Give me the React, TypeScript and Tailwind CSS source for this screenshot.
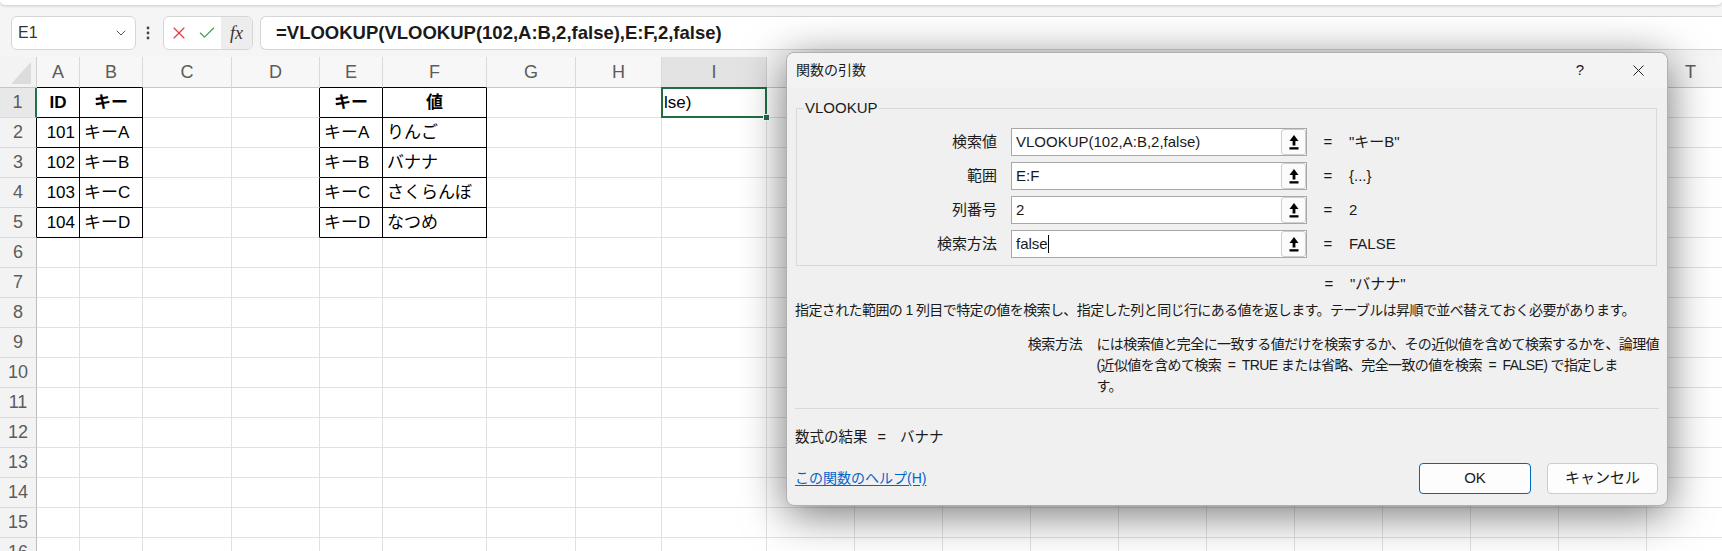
import { Check, ChevronDown, X } from 'lucide-react';

const COLS = ['A', 'B', 'C', 'D', 'E', 'F', 'G', 'H', 'I', 'J', 'K', 'L', 'M', 'N', 'O', 'P', 'Q', 'R', 'S', 'T'];
const ROWS = Array.from({ length: 16 }, (_, i) => i + 1);

type Cell = { text: string; align: 'left' | 'right' | 'center'; bold?: boolean };

const DATA: Record<string, Cell> = {
  A1: { text: 'ID', align: 'center', bold: true },
  B1: { text: 'キー', align: 'center', bold: true },
  E1: { text: 'キー', align: 'center', bold: true },
  F1: { text: '値', align: 'center', bold: true },
  A2: { text: '101', align: 'right' },
  A3: { text: '102', align: 'right' },
  A4: { text: '103', align: 'right' },
  A5: { text: '104', align: 'right' },
  B2: { text: 'キーA', align: 'left' },
  B3: { text: 'キーB', align: 'left' },
  B4: { text: 'キーC', align: 'left' },
  B5: { text: 'キーD', align: 'left' },
  E2: { text: 'キーA', align: 'left' },
  E3: { text: 'キーB', align: 'left' },
  E4: { text: 'キーC', align: 'left' },
  E5: { text: 'キーD', align: 'left' },
  F2: { text: 'りんご', align: 'left' },
  F3: { text: 'バナナ', align: 'left' },
  F4: { text: 'さくらんぼ', align: 'left' },
  F5: { text: 'なつめ', align: 'left' },
};

const ARGS = [
  { label: '検索値', value: 'VLOOKUP(102,A:B,2,false)', result: '"キーB"' },
  { label: '範囲', value: 'E:F', result: '{...}' },
  { label: '列番号', value: '2', result: '2' },
  { label: '検索方法', value: 'false', result: 'FALSE', caret: true },
];

// columns J..S sit under the dialog, their letters are never visible
const HIDDEN = ['J', 'K', 'L', 'M', 'N', 'O', 'P', 'Q', 'R', 'S'];

function inTable(c: string, r: number) {
  return r <= 5 && (c === 'A' || c === 'B' || c === 'E' || c === 'F');
}

function RefButton() {
  return (
    <div className="w-[25px] h-full shrink-0 border border-[#cfcfcf] rounded-[3px] bg-[#fbfbfb] flex items-center justify-center">
      <svg width="10" height="15" viewBox="0 0 10 15">
        <path d="M5 0 L9.5 6 L0.5 6 Z" fill="#000" />
        <rect x="3.6" y="5.5" width="2.8" height="5" fill="#000" />
        <rect x="0.5" y="12.2" width="9" height="2.3" fill="#000" />
      </svg>
    </div>
  );
}

function Dialog() {
  return (
    <div className="absolute left-[786px] top-[52px] w-[882px] h-[454px] z-10 bg-[#f0f0f0] rounded-[8px] border border-[#b0b0b0] shadow-[0_8px_44px_rgba(0,0,0,0.55)] flex flex-col text-[#1a1a1a]">
      <div className="h-[35px] shrink-0 flex items-center pl-[9px] bg-[#f3f3f3] rounded-t-[8px]">
        <span className="text-[14px]">関数の引数</span>
        <div className="ml-auto flex items-center gap-[12px] pr-[6px]">
          <div className="w-[46px] flex justify-center text-[15px]">?</div>
          <div className="w-[46px] flex justify-center">
            <X size={19} strokeWidth={1.2} />
          </div>
        </div>
      </div>

      <div className="flex-1 px-[8px] flex flex-col">
        <fieldset className="mt-[10px] ml-[1px] mr-[2px] border border-[#d9d9d9] pb-[7px]">
          <legend className="ml-[7px] px-[1px] text-[15px] leading-[20px]">VLOOKUP</legend>
          <div className="mt-[10px] flex flex-col gap-[6px]">
            {ARGS.map((a) => (
              <div key={a.label} className="flex items-center h-[28px]">
                <div className="w-[200px] text-right text-[15px]">{a.label}</div>
                <div className="ml-[14px] w-[296px] h-[28px] border border-[#a8a8a8] bg-white flex items-center">
                  <div className="flex-1 pl-[4px] text-[15px] flex items-center">
                    {a.value}
                    {a.caret && <span className="w-px h-[18px] bg-black" />}
                  </div>
                  <RefButton />
                </div>
                <div className="w-[42px] text-center text-[15px]">=</div>
                <div className="text-[15px]">{a.result}</div>
              </div>
            ))}
          </div>
        </fieldset>

        <div className="mt-[8px] flex h-[20px] items-center text-[15px]">
          <div className="w-[513px]" />
          <div className="w-[42px] text-center">=</div>
          <div>"バナナ"</div>
        </div>

        <div className="mt-[6px] leading-[20px] text-[14px] tracking-[-0.6px] whitespace-nowrap">
          指定された範囲の 1 列目で特定の値を検索し、指定した列と同じ行にある値を返します。テーブルは昇順で並べ替えておく必要があります。
        </div>

        <div className="mt-[14px] flex text-[14px] leading-[21px]">
          <div className="w-[294px] text-right tracking-[-0.3px]">検索方法</div>
          <div className="ml-[14px] flex flex-col whitespace-nowrap tracking-[-0.6px]">
            <span>には検索値と完全に一致する値だけを検索するか、その近似値を含めて検索するかを、論理値</span>
            <span>(近似値を含めて検索 &nbsp;=&nbsp; TRUE または省略、完全一致の値を検索 &nbsp;=&nbsp; FALSE) で指定しま</span>
            <span>す。</span>
          </div>
        </div>

        <div className="mt-[11px] h-px bg-[#d9d9d9]" />

        <div className="mt-[19px] h-[20px] flex items-center text-[14.5px]">
          <span>数式の結果</span>
          <span className="ml-[10px]">=</span>
          <span className="ml-[14px]">バナナ</span>
        </div>

        <div className="mt-auto mb-[11px] flex items-center justify-between">
          <span className="text-[14px] text-[#0066cc] underline underline-offset-2">この関数のヘルプ(H)</span>
          <div className="flex gap-[16px] mr-[1px]">
            <div className="w-[112px] h-[31px] border border-[#0067c0] rounded-[4px] bg-[#fdfdfd] flex items-center justify-center text-[15px]">
              OK
            </div>
            <div className="w-[111px] h-[31px] border border-[#cccccc] rounded-[4px] bg-[#fdfdfd] flex items-center justify-center text-[15px]">
              キャンセル
            </div>
          </div>
        </div>
      </div>
    </div>
  );
}

function FormulaBar() {
  return (
    <div className="h-[57px] bg-[#f5f5f5]">
      <div className="h-[5px] bg-white rounded-b-[6px] shadow-[0_1px_3px_rgba(0,0,0,0.18)]" />
      <div className="flex items-center pt-[11px] pl-[11px]">
        <div className="w-[125px] h-[34px] bg-white border border-[#d6d6d6] rounded-[6px] flex items-center justify-between pl-[6px] pr-[6px]">
          <span className="text-[16px] text-[#333]">E1</span>
          <ChevronDown size={16} strokeWidth={1.4} className="text-[#444]" />
        </div>
        <div className="ml-[9px] w-[6px] flex justify-center">
          <svg width="4" height="14" viewBox="0 0 4 14">
            <circle cx="2" cy="2" r="1.4" fill="#444" />
            <circle cx="2" cy="7" r="1.4" fill="#444" />
            <circle cx="2" cy="12" r="1.4" fill="#444" />
          </svg>
        </div>
        <div className="ml-[12px] w-[90px] h-[34px] bg-white border border-[#d6d6d6] rounded-[6px] flex items-center overflow-hidden">
          <div className="w-[29px] flex justify-center">
            <X size={20} strokeWidth={1.4} className="text-[#e0393e]" />
          </div>
          <div className="w-[28px] flex justify-center">
            <Check size={20} strokeWidth={1.4} className="text-[#3c9a4b]" />
          </div>
          <div className="flex-1 h-full bg-[#ededed] flex items-center justify-center font-['Liberation_Serif',serif] italic text-[18px] text-[#333]">
            fx
          </div>
        </div>
        <div className="ml-[7px] flex-1 h-[34px] bg-white border border-r-0 border-[#d6d6d6] rounded-l-[6px] flex items-center pl-[15px]">
          <span className="text-[18.5px] font-bold text-[#1a1a1a]">=VLOOKUP(VLOOKUP(102,A:B,2,false),E:F,2,false)</span>
        </div>
      </div>
    </div>
  );
}

function Grid() {
  return (
    <div className="grid grid-cols-[37px_43px_63px_89px_88px_63px_104px_89px_86px_105px_88px_88px_88px_88px_88px_88px_88px_88px_88px_88px_88px] w-[1735px]">
      <div className="h-[31px] bg-[#f3f3f3] border-r border-b border-r-[#d0d0d0] border-b-[#c6c6c6] flex items-end justify-end pr-[5px] pb-[3px]">
        <svg width="20" height="22" viewBox="0 0 20 22">
          <polygon points="20,0 20,22 0,22" fill="#dcdcdc" />
        </svg>
      </div>
      {COLS.map((c) => (
        <div
          key={c}
          className={
            c === 'I'
              ? 'h-[31px] bg-[#e3e3e3] border-r border-b border-r-[#d0d0d0] border-b-[#c6c6c6] flex items-center justify-center text-[18px] text-[#5c5c5c]'
              : inTable(c, 1)
                ? 'h-[31px] bg-[#f7f7f7] border-r border-b border-r-[#dadada] border-b-black flex items-center justify-center text-[18px] text-[#5c5c5c]'
                : 'h-[31px] bg-[#f7f7f7] border-r border-b border-r-[#dadada] border-b-[#c6c6c6] flex items-center justify-center text-[18px] text-[#5c5c5c]'
          }
        >
          {HIDDEN.includes(c) ? '' : c}
        </div>
      ))}
      {ROWS.map((r) => (
        <Row key={r} r={r} />
      ))}
    </div>
  );
}

function Row({ r }: { r: number }) {
  const headCls =
    r === 1
      ? 'h-[30px] bg-[#e8e8e8] border-b border-r-2 border-b-[#dadada] border-r-[#217346] flex items-center justify-center text-[18px] text-[#5c5c5c]'
      : r <= 5
        ? 'h-[30px] bg-[#f3f3f3] border-b border-r border-b-[#dadada] border-r-black flex items-center justify-center text-[18px] text-[#5c5c5c]'
        : 'h-[30px] bg-[#f3f3f3] border-b border-r border-b-[#dadada] border-r-[#bdbdbd] flex items-center justify-center text-[18px] text-[#5c5c5c]';
  return (
    <>
      <div className={headCls}>{r}</div>
      {COLS.map((c) => {
        const d = DATA[`${c}${r}`];
        const border = inTable(c, r)
          ? 'border-black'
          : c === 'D' && r <= 5
            ? 'border-r-black border-b-[#e1e1e1]'
            : 'border-[#e1e1e1]';
        const align = !d ? '' : d.align === 'right' ? 'justify-end' : d.align === 'center' ? 'justify-center' : 'justify-start';
        if (c === 'I' && r === 1) {
          return (
            <div key={c} className="relative h-[30px] border-r border-b border-[#e1e1e1] flex items-center px-[2px] text-[17px]">
              lse)
              <div className="absolute -top-[1px] -left-[1px] -right-[1px] -bottom-[1px] border-2 border-[#1e6e42]" />
              <div className="absolute -right-[4px] -bottom-[4px] w-[7px] h-[7px] bg-[#1e6e42] border border-white" />
            </div>
          );
        }
        return (
          <div key={c} className={`h-[30px] border-r border-b ${border} flex items-center px-[4px] text-[17px] whitespace-nowrap ${align} ${d?.bold ? 'font-bold' : ''}`}>
            {d?.text}
          </div>
        );
      })}
    </>
  );
}

export default function App() {
  return (
    <div className="relative w-[1722px] h-[551px] overflow-hidden bg-white text-black font-['Liberation_Sans','Noto_Sans_CJK_JP',sans-serif]">
      <FormulaBar />
      <Grid />
      <Dialog />
    </div>
  );
}
